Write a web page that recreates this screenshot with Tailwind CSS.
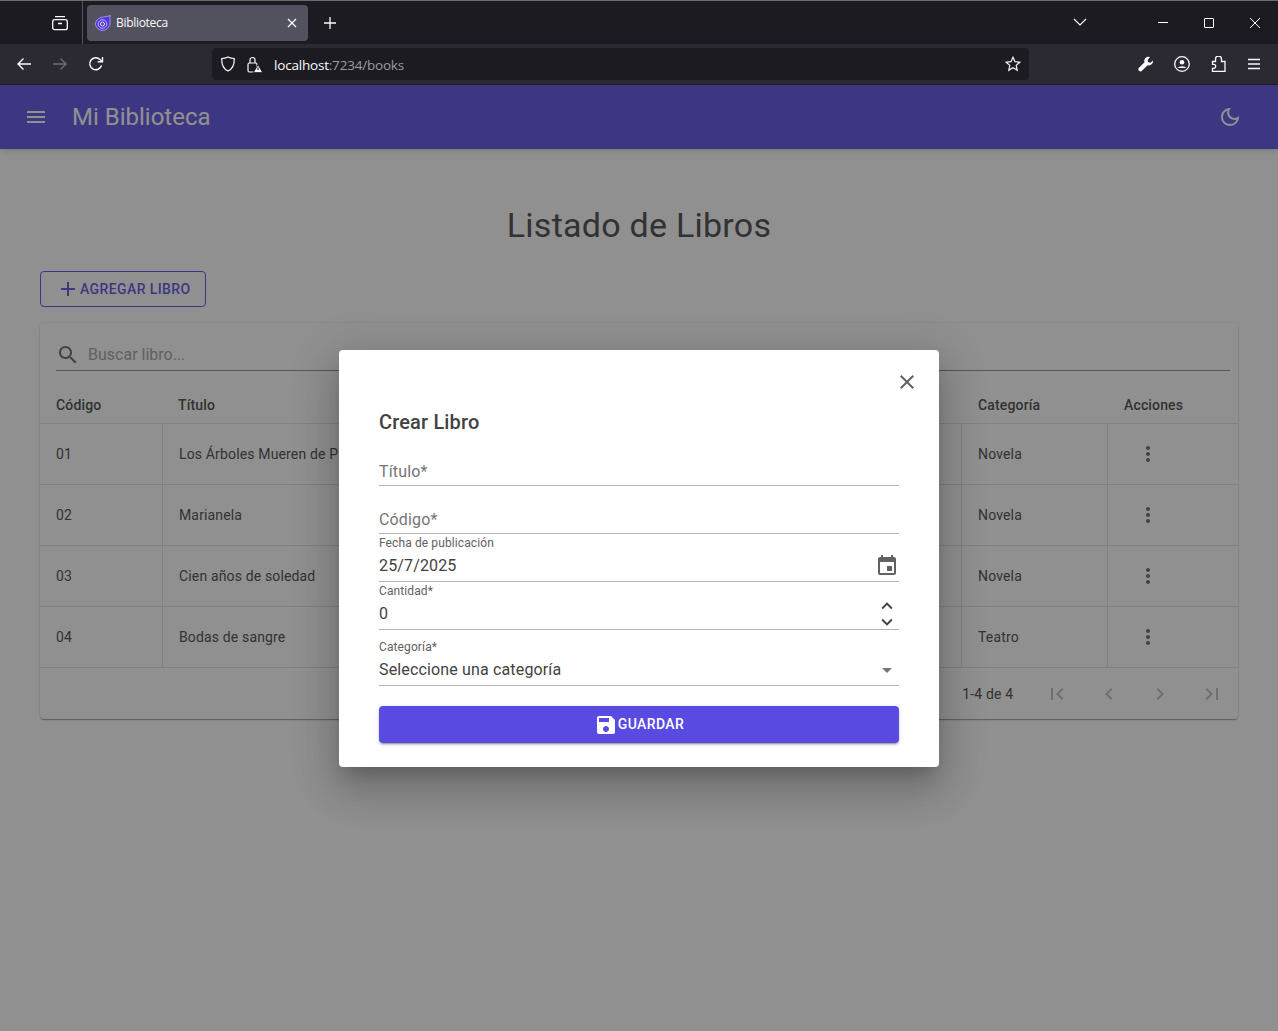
<!DOCTYPE html>
<html>
  <head>
    <meta charset="UTF-8" />
    <meta name="viewport" content="width=device-width, initial-scale=1.0" />
    <title>Biblioteca</title>
    <script src="https://cdn.jsdelivr.net/npm/@tailwindcss/browser@4"></script>
  </head>
  <body class="bg-white h-[1031px] overflow-hidden flex flex-col font-['Roboto',sans-serif]">
    <!-- browser tabs -->
    <div class="h-[44px] shrink-0 bg-[#1c1b22] border-t border-[#6b6b6b] flex items-center text-white font-['Open_Sans',sans-serif]">
      <div class="w-[83px] h-full flex items-center justify-end pr-[14px] border-r border-[#55545c]">
        <svg class="w-[16px] h-[16px]" viewBox="0 0 16 16" fill="none" stroke="#fbfbfe" stroke-width="1.3"><rect x="0.7" y="4.7" width="14.6" height="10" rx="2"/><path d="M3 1.6h10M6 8.5h4"/></svg>
      </div>
      <div class="ml-1 w-[221px] h-[36px] bg-[#52525e] rounded-[4px] flex items-center pl-[8px] pr-[11px]">
        <svg class="w-[16px] h-[16px] shrink-0" viewBox="0 0 16 16" fill="none"><path d="M.5 9.500C.5 6 2.500 3.500 6 2.500c3.500-.8 6-.8 9.500-2-.8 1.500-.5 3-.5 6.500A7.800 7.800 0 0 1 7.800 15.500 7.300 7.300 0 0 1 .5 9.500z" fill="#4f35d8" stroke="#b9a8ff" stroke-width="0.8"/><circle cx="7.500" cy="9" r="4.300" fill="none" stroke="#c9bcff" stroke-width="1"/><circle cx="7.500" cy="9" r="2" fill="none" stroke="#ece8ff" stroke-width="1"/></svg>
        <span class="ml-[5px] text-[12px] tracking-[-0.3px] text-[#fbfbfe]">Biblioteca</span>
        <svg class="w-[10px] h-[10px] ml-auto" viewBox="0 0 10 10" stroke="#fbfbfe" stroke-width="1.300"><path d="M1 1l8 8M9 1l-8 8"/></svg>
      </div>
      <svg class="w-[12px] h-[12px] ml-[16px]" viewBox="0 0 12 12" stroke="#fbfbfe" stroke-width="1.300"><path d="M6 0v12M0 6h12"/></svg>
      <svg class="w-[14px] h-[8px] ml-auto -mt-[2px]" viewBox="0 0 14 8" fill="none" stroke="#fbfbfe" stroke-width="1.200"><path d="M1 1l6 6 6-6"/></svg>
      <div class="w-[71px]"></div>
      <div class="w-[10px] h-px bg-white"></div>
      <div class="w-[36px]"></div>
      <div class="w-[10px] h-[10px] border border-white rounded-[1px]"></div>
      <div class="w-[36px]"></div>
      <svg class="w-[10px] h-[10px] mr-[18px]" viewBox="0 0 10 10" stroke="#fff" stroke-width="1"><path d="M0 0l10 10M10 0L0 10"/></svg>
    </div>

    <!-- browser toolbar -->
    <div class="h-[41px] shrink-0 bg-[#2b2a33] border-b border-[#1c1b22] flex items-center font-['Open_Sans',sans-serif]">
      <svg class="w-[16px] h-[16px] ml-[16px]" viewBox="0 0 16 16" fill="none" stroke="#fbfbfe" stroke-width="1.400"><path d="M15 8H2M7.500 2.500L2 8l5.500 5.500"/></svg>
      <svg class="w-[16px] h-[16px] ml-[20px]" viewBox="0 0 16 16" fill="none" stroke="#6f6e75" stroke-width="1.400"><path d="M1 8h13M8.500 2.500L14 8l-5.500 5.500"/></svg>
      <svg class="w-[16px] h-[16px] ml-[20px]" viewBox="0 0 16 16" fill="none" stroke="#fbfbfe" stroke-width="1.400"><path d="M13.500 9.500A6 6 0 1 1 12 3.500l2 2"/><path d="M14.500 1v4.800H9.700" /></svg>
      <div class="ml-[108px] w-[817px] h-[32px] bg-[#1c1b22] rounded-[4px] flex items-center pl-[8px] pr-[8px]">
        <svg class="w-[16px] h-[16px]" viewBox="0 0 16 16" fill="none" stroke="#fbfbfe" stroke-width="1.200"><path d="M8 1c2 1 4 1.500 6.300 1.500C14.500 9 12.500 13 8 15 3.500 13 1.500 9 1.700 2.500 4 2.500 6 2 8 1z"/></svg>
        <svg class="w-[16px] h-[17px] ml-[11px]" viewBox="0 0 16 17" fill="none"><rect x="1" y="7" width="9" height="9" rx="1.500" stroke="#fbfbfe" stroke-width="1.200"/><path d="M3 7V4a2.500 2.500 0 0 1 5 0v3" stroke="#fbfbfe" stroke-width="1.200"/><path d="M11 8.500l4.800 8.200H6.200z" fill="#fbfbfe" stroke="#1c1b22" stroke-width="1"/><path d="M11 11.500v2.500" stroke="#1c1b22" stroke-width="1.200"/></svg>
        <div class="ml-[11px] pt-[2px] text-[13.500px] tracking-[-0.2px]"><span class="text-[#fbfbfe]">localhost</span><span class="text-[#9d9ca1]">:7234/books</span></div>
        <svg class="w-[16px] h-[16px] ml-auto" viewBox="0 0 16 16" fill="none" stroke="#fbfbfe" stroke-width="1.200"><path d="M8 1.300l2 4.400 4.800.5-3.600 3.200 1 4.800L8 11.800l-4.200 2.400 1-4.800L1.200 6.200 6 5.700z"/></svg>
      </div>
      <svg class="w-[16px] h-[16px] ml-[109px]" viewBox="0 0 16 16" fill="#fbfbfe"><path d="M15 4.500l-2.500 2.300-2.300-.6-.6-2.300L12 1a4.200 4.200 0 0 0-5.500 5.300L1 11.800a2.100 2.100 0 0 0 3 3l5.600-5.600A4.200 4.200 0 0 0 15 4.500z"/></svg>
      <svg class="w-[16px] h-[16px] ml-[20px]" viewBox="0 0 16 16" fill="none"><circle cx="8" cy="8" r="7.300" stroke="#fbfbfe" stroke-width="1.300"/><circle cx="8" cy="6.200" r="2.300" fill="#fbfbfe"/><path d="M3.500 12a5 3 0 0 1 9 0z" fill="#fbfbfe"/></svg>
      <svg class="w-[16px] h-[16px] ml-[20px]" viewBox="0 0 16 16" fill="none" stroke="#fbfbfe" stroke-width="1.300"><path d="M5.500 5.500V3a3 3 0 0 1 6 0v2.500h3.500v10H2.500v-3.200h1.200a2 2 0 0 0 0-4H2.500V5.500z"/></svg>
      <svg class="w-[14px] h-[12px] ml-[21px]" viewBox="0 0 14 12" stroke="#fbfbfe" stroke-width="1.300"><path d="M1 1.500h12M1 6h12M1 10.500h12"/></svg>
    </div>

    <!-- app -->
    <div class="relative flex-1 flex flex-col text-[#424242]">
      <header class="h-[64px] shrink-0 bg-[#594ae2] text-white flex items-center shadow-md pl-[24px] pr-[36px]">
        <svg class="w-[24px] h-[24px]" viewBox="0 0 24 24" fill="currentColor"><path d="M3 18h18v-2H3v2zm0-5h18v-2H3v2zm0-7v2h18V6H3z"/></svg>
        <h1 class="ml-[24px] text-[24px] leading-none">Mi Biblioteca</h1>
        <svg class="w-[24px] h-[24px] ml-auto" viewBox="0 0 24 24" fill="currentColor"><path d="M9.370 5.510C9.190 6.150 9.100 6.820 9.100 7.500c0 4.080 3.320 7.400 7.400 7.400.68 0 1.350-.09 1.990-.27C17.450 17.190 14.930 19 12 19c-3.860 0-7-3.140-7-7 0-2.930 1.810-5.450 4.370-6.490zM12 3c-4.970 0-9 4.030-9 9s4.030 9 9 9 9-4.030 9-9c0-.46-.04-.92-.1-1.360-.98 1.370-2.580 2.260-4.400 2.260-2.980 0-5.400-2.420-5.400-5.400 0-1.810.89-3.420 2.260-4.400C12.920 3.040 12.460 3 12 3z"/></svg>
      </header>

      <main class="px-[40px]">
        <h2 class="mt-[55px] h-[42px] text-center text-[34px] leading-[42px] tracking-[0.25px]">Listado de Libros</h2>
        <button class="mt-[25px] w-[166px] h-[36px] border border-[#594ae2] rounded-[4px] flex items-center pl-[15px] text-[#594ae2] text-[14px] font-medium tracking-[0.4px]">
          <svg class="w-[24px] h-[24px]" viewBox="0 0 24 24" fill="currentColor"><path d="M19 13h-6v6h-2v-6H5v-2h6V5h2v6h6v2z"/></svg>
          <span>AGREGAR LIBRO</span>
        </button>

        <section class="mt-[16px] w-[1198px] h-[396px] rounded-[4px] bg-white shadow-[0_0_0_1px_rgba(0,0,0,0.03),0_2px_1px_-1px_rgba(0,0,0,0.2),0_1px_1px_0_rgba(0,0,0,0.14),0_1px_3px_0_rgba(0,0,0,0.12)] flex flex-col text-[14px] tracking-[0.15px]">
          <div class="h-[36px] mt-[12px] ml-[16px] mr-[8px] flex items-center pt-[4px] border-b border-[#8a8a8a] text-[16px] tracking-normal text-[#9e9e9e]">
            <svg class="w-[24px] h-[24px] text-[#616161]" viewBox="0 0 24 24" fill="currentColor"><path d="M15.500 14h-.79l-.28-.27C15.410 12.590 16 11.110 16 9.500 16 5.910 13.090 3 9.500 3S3 5.910 3 9.500 5.910 16 9.500 16c1.610 0 3.090-.59 4.230-1.570l.27.28v.79l5 4.990L20.490 19l-4.990-5zm-6 0C7.010 14 5 11.990 5 9.500S7.010 5 9.500 5 14 7.010 14 9.500 11.990 14 9.500 14z"/></svg>
            <span class="ml-[8px]">Buscar libro...</span>
          </div>

          <div class="h-[53px] pt-[17px] flex items-center font-medium border-b border-[#e0e0e0]">
            <div class="w-[122px] pl-[16px]">Código</div>
            <div class="w-[800px] pl-[16px]">Título</div>
            <div class="w-[146px] pl-[16px]">Categoría</div>
            <div class="pl-[16px]">Acciones</div>
          </div>

          <div class="h-[61px] flex items-stretch border-b border-[#e0e0e0]">
            <div class="w-[123px] pl-[16px] flex items-center border-r border-[#e0e0e0]">01</div>
            <div class="w-[799px] pl-[16px] flex items-center border-r border-[#e0e0e0]">Los Árboles Mueren de Pie</div>
            <div class="w-[146px] pl-[16px] flex items-center border-r border-[#e0e0e0]">Novela</div>
            <div class="flex-1 pl-[28px] flex items-center text-[#616161]"><svg class="w-[24px] h-[24px]" viewBox="0 0 24 24" fill="currentColor"><path d="M12 8c1.100 0 2-.9 2-2s-.9-2-2-2-2 .9-2 2 .9 2 2 2zm0 2c-1.100 0-2 .9-2 2s.9 2 2 2 2-.9 2-2-.9-2-2-2zm0 6c-1.100 0-2 .9-2 2s.9 2 2 2 2-.9 2-2-.9-2-2-2z"/></svg></div>
          </div>
          <div class="h-[61px] flex items-stretch border-b border-[#e0e0e0]">
            <div class="w-[123px] pl-[16px] flex items-center border-r border-[#e0e0e0]">02</div>
            <div class="w-[799px] pl-[16px] flex items-center border-r border-[#e0e0e0]">Marianela</div>
            <div class="w-[146px] pl-[16px] flex items-center border-r border-[#e0e0e0]">Novela</div>
            <div class="flex-1 pl-[28px] flex items-center text-[#616161]"><svg class="w-[24px] h-[24px]" viewBox="0 0 24 24" fill="currentColor"><path d="M12 8c1.100 0 2-.9 2-2s-.9-2-2-2-2 .9-2 2 .9 2 2 2zm0 2c-1.100 0-2 .9-2 2s.9 2 2 2 2-.9 2-2-.9-2-2-2zm0 6c-1.100 0-2 .9-2 2s.9 2 2 2 2-.9 2-2-.9-2-2-2z"/></svg></div>
          </div>
          <div class="h-[61px] flex items-stretch border-b border-[#e0e0e0]">
            <div class="w-[123px] pl-[16px] flex items-center border-r border-[#e0e0e0]">03</div>
            <div class="w-[799px] pl-[16px] flex items-center border-r border-[#e0e0e0]">Cien años de soledad</div>
            <div class="w-[146px] pl-[16px] flex items-center border-r border-[#e0e0e0]">Novela</div>
            <div class="flex-1 pl-[28px] flex items-center text-[#616161]"><svg class="w-[24px] h-[24px]" viewBox="0 0 24 24" fill="currentColor"><path d="M12 8c1.100 0 2-.9 2-2s-.9-2-2-2-2 .9-2 2 .9 2 2 2zm0 2c-1.100 0-2 .9-2 2s.9 2 2 2 2-.9 2-2-.9-2-2-2zm0 6c-1.100 0-2 .9-2 2s.9 2 2 2 2-.9 2-2-.9-2-2-2z"/></svg></div>
          </div>
          <div class="h-[61px] flex items-stretch border-b border-[#e0e0e0]">
            <div class="w-[123px] pl-[16px] flex items-center border-r border-[#e0e0e0]">04</div>
            <div class="w-[799px] pl-[16px] flex items-center border-r border-[#e0e0e0]">Bodas de sangre</div>
            <div class="w-[146px] pl-[16px] flex items-center border-r border-[#e0e0e0]">Teatro</div>
            <div class="flex-1 pl-[28px] flex items-center text-[#616161]"><svg class="w-[24px] h-[24px]" viewBox="0 0 24 24" fill="currentColor"><path d="M12 8c1.100 0 2-.9 2-2s-.9-2-2-2-2 .9-2 2 .9 2 2 2zm0 2c-1.100 0-2 .9-2 2s.9 2 2 2 2-.9 2-2-.9-2-2-2zm0 6c-1.100 0-2 .9-2 2s.9 2 2 2 2-.9 2-2-.9-2-2-2z"/></svg></div>
          </div>

          <div class="flex-1 flex items-center justify-end text-[#bdbdbd]">
            <span class="mr-[18px] pt-[2px] text-[#424242]">1-4 de 4</span>
            <div class="w-[51.700px] flex justify-center"><svg class="w-[24px] h-[24px]" viewBox="0 0 24 24" fill="currentColor"><path d="M18.410 16.590L13.820 12l4.590-4.590L17 6l-6 6 6 6zM6 6h2v12H6z"/></svg></div>
            <div class="w-[51.700px] flex justify-center"><svg class="w-[24px] h-[24px]" viewBox="0 0 24 24" fill="currentColor"><path d="M15.410 7.410L14 6l-6 6 6 6 1.410-1.410L10.830 12z"/></svg></div>
            <div class="w-[51.700px] flex justify-center"><svg class="w-[24px] h-[24px]" viewBox="0 0 24 24" fill="currentColor"><path d="M10 6L8.590 7.410 13.170 12l-4.580 4.590L10 18l6-6z"/></svg></div>
            <div class="w-[51.700px] flex justify-center"><svg class="w-[24px] h-[24px]" viewBox="0 0 24 24" fill="currentColor"><path d="M5.590 7.410L10.180 12l-4.590 4.590L7 18l6-6-6-6zM16 6h2v12h-2z"/></svg></div>
          </div>
        </section>
      </main>

      <!-- overlay + dialog -->
      <div class="absolute inset-0 bg-[#212121]/50"></div>
      <div class="absolute left-[339px] top-[265px] w-[600px] h-[417px] bg-white rounded-[4px] shadow-[0_11px_15px_-7px_rgba(0,0,0,0.2),0_24px_38px_3px_rgba(0,0,0,0.14),0_9px_46px_8px_rgba(0,0,0,0.12)] px-[40px] pt-[56px]">
        <svg class="absolute right-[20px] top-[20px] w-[24px] h-[24px] text-[#616161]" viewBox="0 0 24 24" fill="currentColor"><path d="M19 6.410L17.590 5 12 10.590 6.410 5 5 6.410 10.590 12 5 17.590 6.410 19 12 13.410 17.590 19 19 17.590 13.410 12z"/></svg>
        <h3 class="h-[32px] text-[20px] leading-[32px] font-medium tracking-[0.15px]">Crear Libro</h3>

        <div class="h-[48px] flex items-end border-b border-[#b4b4b4]">
          <span class="pb-[3px] text-[16px] leading-[20px] tracking-[0.15px] text-[#757575]">Título*</span>
        </div>
        <div class="h-[48px] flex items-end border-b border-[#b4b4b4]">
          <span class="pb-[3px] text-[16px] leading-[20px] tracking-[0.15px] text-[#757575]">Código*</span>
        </div>
        <div class="h-[48px] flex flex-col border-b border-[#b4b4b4] relative">
          <span class="pt-[2px] text-[12px] leading-[15px] tracking-[0.11px] text-[#616161]">Fecha de publicación</span>
          <span class="mt-[5px] text-[16px] leading-[20px] tracking-[0.15px]">25/7/2025</span>
          <svg class="absolute right-0 top-[20px] w-[24px] h-[24px] text-[#616161]" viewBox="0 0 24 24" fill="currentColor"><path d="M17 12h-5v5h5v-5zM16 1v2H8V1H6v2H5c-1.110 0-1.990.9-1.990 2L3 19c0 1.100.89 2 2 2h14c1.100 0 2-.9 2-2V5c0-1.100-.9-2-2-2h-1V1h-2zm3 18H5V8h14v11z"/></svg>
        </div>
        <div class="h-[48px] flex flex-col border-b border-[#b4b4b4] relative">
          <span class="pt-[2px] text-[12px] leading-[15px] tracking-[0.11px] text-[#616161]">Cantidad*</span>
          <span class="mt-[5px] text-[16px] leading-[20px] tracking-[0.15px]">0</span>
          <div class="absolute right-0 top-[13px] w-[24px] flex flex-col items-center text-[#424242]">
            <svg class="w-[22px] h-[22px]" viewBox="0 0 24 24" fill="currentColor"><path d="M7.410 15.410L12 10.830l4.590 4.580L18 14l-6-6-6 6z"/></svg>
            <svg class="w-[22px] h-[22px] -mt-[6px]" viewBox="0 0 24 24" fill="currentColor"><path d="M7.410 8.590L12 13.170l4.590-4.580L18 10l-6 6-6-6 1.410-1.410z"/></svg>
          </div>
        </div>
        <div class="h-[56px] flex flex-col border-b border-[#b4b4b4] relative">
          <span class="pt-[10px] text-[12px] leading-[15px] tracking-[0.11px] text-[#616161]">Categoría*</span>
          <span class="mt-[5px] text-[16px] leading-[20px] tracking-[0.15px]">Seleccione una categoría</span>
          <svg class="absolute right-0 top-[28px] w-[24px] h-[24px] text-[#757575]" viewBox="0 0 24 24" fill="currentColor"><path d="M7 10l5 5 5-5z"/></svg>
        </div>

        <button class="mt-[20px] w-full h-[37px] bg-[#594ae2] rounded-[4px] shadow-[0_3px_1px_-2px_rgba(0,0,0,0.2),0_2px_2px_0_rgba(0,0,0,0.14),0_1px_5px_0_rgba(0,0,0,0.12)] flex items-center justify-center text-white text-[14px] font-medium tracking-[0.4px]">
          <svg class="w-[24px] h-[24px]" viewBox="0 0 24 24" fill="currentColor"><path d="M17 3H5c-1.110 0-2 .9-2 2v14c0 1.100.89 2 2 2h14c1.100 0 2-.9 2-2V7l-4-4zm-5 16c-1.660 0-3-1.340-3-3s1.340-3 3-3 3 1.340 3 3-1.340 3-3 3zm3-10H5V5h10v4z"/></svg>
          <span>GUARDAR</span>
        </button>
      </div>
    </div>
  </body>
</html>
